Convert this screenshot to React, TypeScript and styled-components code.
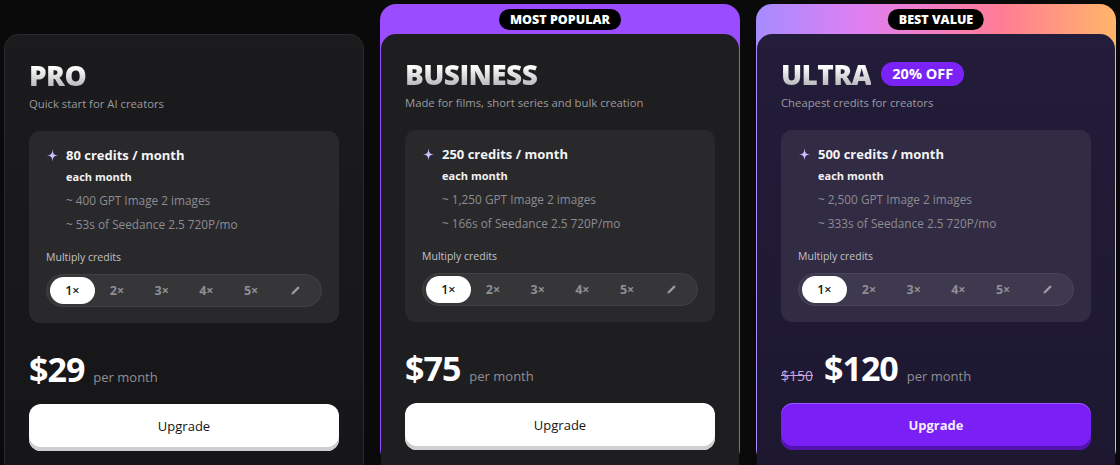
import styled, { createGlobalStyle, css } from 'styled-components';

const GlobalStyle = createGlobalStyle`
  html, body {
    margin: 0;
    background: #0a0a0a;
  }
  body {
    font-family: "Open Sans", "Noto Sans", sans-serif;
    color: #fff;
    -webkit-font-smoothing: antialiased;
  }
`;

type Variant = 'plain' | 'popular' | 'ultra';

type Plan = {
  name: string;
  tagline: string;
  credits: number;
  images: string;
  seconds: number;
  price: number;
  oldPrice?: number;
  discount?: string;
  badge?: string;
  variant: Variant;
};

const plans: Plan[] = [
  {
    name: 'PRO',
    tagline: 'Quick start for AI creators',
    credits: 80,
    images: '400',
    seconds: 53,
    price: 29,
    variant: 'plain',
  },
  {
    name: 'BUSINESS',
    tagline: 'Made for films, short series and bulk creation',
    credits: 250,
    images: '1,250',
    seconds: 166,
    price: 75,
    badge: 'MOST POPULAR',
    variant: 'popular',
  },
  {
    name: 'ULTRA',
    tagline: 'Cheapest credits for creators',
    credits: 500,
    images: '2,500',
    seconds: 333,
    price: 120,
    oldPrice: 150,
    discount: '20% OFF',
    badge: 'BEST VALUE',
    variant: 'ultra',
  },
];

const multipliers = ['1×', '2×', '3×', '4×', '5×'];

const Page = styled.div`
  display: grid;
  grid-template-columns: repeat(3, 360px);
  gap: 16px;
  padding: 4px 4px 0;
  height: 461px;
  overflow: hidden;
`;

const Frame = styled.div<{ $variant: Variant }>`
  position: relative;
  display: flex;
  flex-direction: column;
  border-radius: 16px;
  padding: 30px 0 0;

  ${({ $variant }) =>
    $variant === 'popular' &&
    css`
      background: #9a4cff;
      padding: 30px 1px 0;
    `}

  ${({ $variant }) =>
    $variant === 'ultra' &&
    css`
      background: linear-gradient(90deg, #a68cff 0%, #e17ff0 30%, #ff7c95 68%, #ffb56a 100%);
      padding: 30px 1px 0;
    `}
`;

const Badge = styled.span`
  position: absolute;
  top: 5px;
  left: 50%;
  transform: translateX(-50%);
  background: #000;
  color: #fff;
  border-radius: 11px;
  padding: 3px 11px;
  font-family: "Open Sans", sans-serif;
  font-weight: 800;
  font-size: 12.5px;
  line-height: 15px;
  white-space: nowrap;
`;

const Card = styled.div<{ $variant: Variant }>`
  flex: 1;
  display: flex;
  flex-direction: column;
  border-radius: 15px 15px 0 0;
  padding: 24px 24px 0;
  background: ${({ $variant }) =>
    $variant === 'ultra'
      ? 'linear-gradient(180deg, #231c3a 0%, #1d1830 100%)'
      : $variant === 'popular'
      ? '#1e1e21'
      : 'linear-gradient(180deg, #1b1b1e 0%, #161618 100%)'};
  border: ${({ $variant }) => ($variant === 'plain' ? '1px solid #2a2a2d' : 'none')};
  border-bottom: none;
`;

const TitleRow = styled.div`
  display: flex;
  align-items: center;
  gap: 10px;
  height: 32px;
`;

const Title = styled.h2`
  margin: 0;
  font-family: "Open Sans", sans-serif;
  font-weight: 800;
  font-size: 28px;
  line-height: 32px;
  letter-spacing: -0.6px;
  background: linear-gradient(180deg, #ffffff 25%, #a9a9ad 100%);
  -webkit-background-clip: text;
  background-clip: text;
  color: transparent;
`;

const Discount = styled.span`
  background: #7b22f6;
  color: #fff;
  border-radius: 12px;
  padding: 3px 11px;
  font-family: "Open Sans", sans-serif;
  font-weight: 700;
  font-size: 14.5px;
  line-height: 18px;
`;

const Tagline = styled.p`
  margin: 5px 0 0;
  font-size: 11.3px;
  line-height: 15px;
  color: #9b9b9f;
`;

const CreditsBox = styled.div<{ $variant: Variant }>`
  margin-top: 20px;
  border-radius: 11px;
  padding: 15px 17px 16px;
  background: ${({ $variant }) => ($variant === 'ultra' ? '#312b44' : '#29292c')};
`;

const CreditsHead = styled.div`
  display: flex;
  align-items: center;
  gap: 8px;
  padding-left: 1px;
  font-size: 13px;
  font-weight: 700;
  line-height: 18px;
  color: #f4f4f5;
`;

const Detail = styled.div<{ $strong?: boolean }>`
  padding-left: 20px;
  font-size: ${({ $strong }) => ($strong ? '11px' : '11.8px')};
  font-weight: ${({ $strong }) => ($strong ? 700 : 400)};
  color: ${({ $strong }) => ($strong ? '#f1f1f2' : '#8c8c92')};
  line-height: 15px;
  margin-top: ${({ $strong }) => ($strong ? '5px' : '9px')};
`;

const MultiplyLabel = styled.div`
  margin-top: 18px;
  font-size: 10.5px;
  line-height: 14px;
  color: #c2c2c6;
`;

const Segmented = styled.div<{ $variant: Variant }>`
  margin-top: 10px;
  display: flex;
  align-items: center;
  height: 33px;
  padding: 0 3px;
  box-sizing: border-box;
  border-radius: 17px;
  background: ${({ $variant }) => ($variant === 'ultra' ? '#3f394f' : '#363639')};
  border: 1px solid ${({ $variant }) => ($variant === 'ultra' ? '#4a445b' : '#414144')};
`;

const Segment = styled.button<{ $active?: boolean }>`
  flex: 1;
  height: 27px;
  border: none;
  border-radius: 14px;
  background: ${({ $active }) => ($active ? '#ffffff' : 'transparent')};
  color: ${({ $active }) => ($active ? '#151515' : '#8e8e94')};
  font-family: "Open Sans", sans-serif;
  font-weight: ${({ $active }) => ($active ? 600 : 700)};
  font-size: 12.5px;
  display: flex;
  align-items: center;
  justify-content: center;
  padding: 0;
  cursor: pointer;
`;

const PriceRow = styled.div`
  display: flex;
  align-items: baseline;
  gap: 9px;
  margin-top: 24px;
  height: 44px;
`;

const OldPrice = styled.span`
  font-size: 14px;
  color: #c9a3dc;
  text-decoration: line-through;
  margin-right: 2px;
`;

const Price = styled.span`
  font-family: "Open Sans", sans-serif;
  font-weight: 700;
  font-size: 34px;
  letter-spacing: -1px;
  line-height: 44px;
  color: #fff;
`;

const PerMonth = styled.span`
  font-size: 13px;
  color: #8f8f95;
`;

const Upgrade = styled.button<{ $variant: Variant }>`
  margin-top: 13px;
  height: 47px;
  border: none;
  border-radius: 12px;
  font-family: "Open Sans", sans-serif;
  font-size: 13px;
  cursor: pointer;
  padding-bottom: 4px;
  ${({ $variant }) =>
    $variant === 'ultra'
      ? css`
          background: #7a1ff6;
          color: #f3ecff;
          font-weight: 700;
          box-shadow: inset 0 -4px 0 #5313b0, inset 0 1px 0 #9a55ff;
        `
      : css`
          background: #ffffff;
          color: #141414;
          font-weight: 500;
          box-shadow: inset 0 -4px 0 #cfcfd2;
        `}
`;

const Sparkle = () => (
  <svg width="11" height="13" viewBox="0 0 11 13" aria-hidden>
    <path
      d="M5.5 0 C5.8 4.6 6.6 5.9 11 6.5 C6.6 7.1 5.8 8.4 5.5 13 C5.2 8.4 4.4 7.1 0 6.5 C4.4 5.9 5.2 4.6 5.5 0 Z"
      fill="#cbbcff"
    />
  </svg>
);

const Pencil = () => (
  <svg width="11" height="11" viewBox="0 0 24 24" aria-hidden>
    <path d="M3 21l1.2-4.8L16.5 3.9a2 2 0 0 1 2.8 0l.8.8a2 2 0 0 1 0 2.8L7.8 19.8z" fill="#9a9aa0" />
  </svg>
);

const PlanCard = ({ plan }: { plan: Plan }) => (
  <Frame $variant={plan.variant}>
    {plan.badge && <Badge>{plan.badge}</Badge>}
    <Card $variant={plan.variant}>
      <TitleRow>
        <Title>{plan.name}</Title>
        {plan.discount && <Discount>{plan.discount}</Discount>}
      </TitleRow>
      <Tagline>{plan.tagline}</Tagline>

      <CreditsBox $variant={plan.variant}>
        <CreditsHead>
          <Sparkle />
          {plan.credits} credits / month
        </CreditsHead>
        <Detail $strong>each month</Detail>
        <Detail>~ {plan.images} GPT Image 2 images</Detail>
        <Detail>~ {plan.seconds}s of Seedance 2.5 720P/mo</Detail>
        <MultiplyLabel>Multiply credits</MultiplyLabel>
        <Segmented $variant={plan.variant}>
          {multipliers.map((m, i) => (
            <Segment key={m} $active={i === 0}>
              {m}
            </Segment>
          ))}
          <Segment>
            <Pencil />
          </Segment>
        </Segmented>
      </CreditsBox>

      <PriceRow>
        {plan.oldPrice && <OldPrice>${plan.oldPrice}</OldPrice>}
        <Price>${plan.price}</Price>
        <PerMonth>per month</PerMonth>
      </PriceRow>

      <Upgrade $variant={plan.variant}>Upgrade</Upgrade>
    </Card>
  </Frame>
);

export default function App() {
  return (
    <>
      <GlobalStyle />
      <Page>
        {plans.map((p) => (
          <PlanCard key={p.name} plan={p} />
        ))}
      </Page>
    </>
  );
}
